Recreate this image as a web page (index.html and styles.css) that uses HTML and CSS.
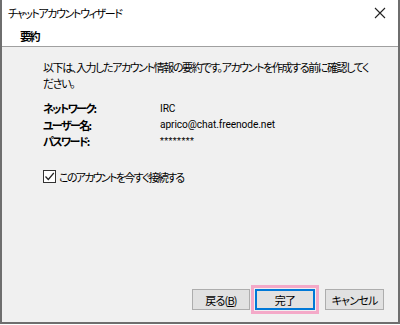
FILE: index.html
```html
<!DOCTYPE html>
<html lang="ja">
<head>
    <meta charset="UTF-8">
    <title>チャットアカウントウィザード</title>
    <link rel="stylesheet" href="styles.css">
</head>
<body>
    <div class="window">
        <div class="titlebar">
            <span class="title">チャットアカウントウィザード</span>
            <svg class="close" width="12" height="12" viewBox="0 0 12 12">
                <path d="M1 1 L11 11 M11 1 L1 11" stroke="#222" stroke-width="1.1" fill="none"/>
            </svg>
        </div>
        <div class="header">要約</div>
        <div class="content">
            <p class="desc">以下は、入力したアカウント情報の要約です。アカウントを作成する前に確認してく<br>ださい。</p>
            <div class="summary">
                <span class="key">ネットワーク:</span><span class="val">IRC</span>
                <span class="key">ユーザー名:</span><span class="val">aprico@chat.freenode.net</span>
                <span class="key">パスワード:</span><span class="val stars">********</span>
            </div>
            <label class="check">
                <span class="box">
                    <svg width="11" height="11" viewBox="0 0 11 11">
                        <path d="M1.5 5.5 L4.3 8.5 L9.8 2" stroke="#222" stroke-width="1.2" fill="none"/>
                    </svg>
                </span>
                このアカウントを今すぐ接続する
            </label>
            <div class="buttons">
                <button class="btn">戻る(<u>B</u>)</button>
                <button class="btn default">完了</button>
                <button class="btn cancel">キャンセル</button>
            </div>
        </div>
    </div>
</body>
</html>
```

FILE: styles.css
```css
body {
    margin: 0;
    background: #ffffff;
    font-family: "Noto Sans CJK JP", sans-serif;
    font-size: 11px;
    letter-spacing: -1.4px;
    font-feature-settings: "palt";
    color: #000;
}
.window {
    width: 396px;
    height: 322px;
    border: 2px solid #6e6e6e;
    border-top: none;
    display: flex;
    flex-direction: column;
    background: #f0f0f0;
}
.titlebar {
    height: 26px;
    background: #ffffff;
    display: flex;
    align-items: center;
    justify-content: space-between;
    padding: 0 12px 0 6px;
}
.title {
    line-height: 16px;
}
.header {
    height: 20px;
    background: #ffffff;
    padding-left: 18px;
    font-weight: bold;
    line-height: 21px;
    border-bottom: 1px solid #a0a0a0;
}
.content {
    flex: 1;
    display: flex;
    flex-direction: column;
    padding: 12px 14px 12px 41px;
}
.desc {
    margin: 0;
    line-height: 16px;
    white-space: nowrap;
}
.summary {
    display: grid;
    grid-template-columns: 117px auto;
    grid-auto-rows: 16.5px;
    margin-top: 9px;
    align-items: center;
}
.key {
    font-weight: bold;
    letter-spacing: -1.6px;
}
.val {
    font-family: Roboto, "Liberation Sans", sans-serif;
    font-size: 10.2px;
    letter-spacing: -0.1px;
}
.stars {
    font-size: 9px;
    letter-spacing: 0.4px;
}
.check {
    display: flex;
    align-items: center;
    gap: 3px;
    margin-top: 19px;
    line-height: 16px;
    letter-spacing: -1.7px;
}
.box {
    width: 11px;
    height: 11px;
    border: 1px solid #333;
    background: #fff;
    display: flex;
}
.buttons {
    margin-top: auto;
    display: flex;
    justify-content: flex-end;
}
.btn {
    width: 58px;
    height: 21px;
    background: #e1e1e1;
    border: 1px solid #adadad;
    font-family: inherit;
    font-size: 11px;
    letter-spacing: -0.8px;
    font-feature-settings: "palt";
    color: #000;
    padding: 0;
    margin: 0;
}
.btn.default {
    width: 60px;
    margin-left: 5px;
    border: 2px solid #0078d7;
    outline: 3px solid #f4a9c8;
    outline-offset: 1px;
}
.btn.cancel {
    width: 59px;
    margin-left: 10px;
}
```
